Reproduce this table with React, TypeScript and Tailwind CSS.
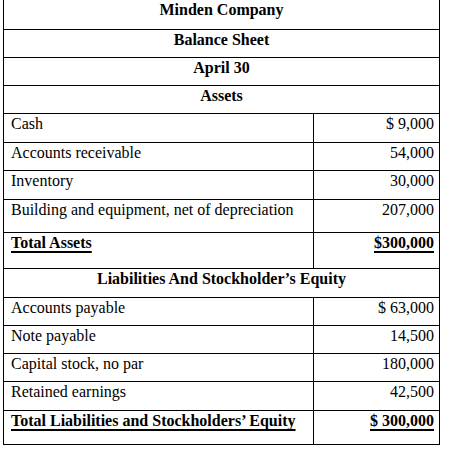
const serif = { fontFamily: '"Liberation Serif", "Times New Roman", serif' };

type Row = { label: string; value: string; h: string; total?: boolean };

const assets: Row[] = [
  { label: 'Cash', value: '$ 9,000', h: 'h-[29px]' },
  { label: 'Accounts receivable', value: '54,000', h: 'h-[28px]' },
  { label: 'Inventory', value: '30,000', h: 'h-[29px]' },
  { label: 'Building and equipment, net of depreciation', value: '207,000', h: 'h-[33px]' },
  { label: 'Total Assets', value: '$300,000', h: 'h-[36px]', total: true },
];

const liabilities: Row[] = [
  { label: 'Accounts payable', value: '$ 63,000', h: 'h-[28px]' },
  { label: 'Note payable', value: '14,500', h: 'h-[28px]' },
  { label: 'Capital stock, no par', value: '180,000', h: 'h-[28px]' },
  { label: 'Retained earnings', value: '42,500', h: 'h-[29px]' },
  { label: 'Total Liabilities and Stockholders\u2019 Equity', value: '$ 300,000', h: 'h-[34px]', total: true },
];

function Heading({ text, h }: { text: string; h: string }) {
  return (
    <div className={`${h} border-t border-black text-center font-bold pt-[1px] first:border-t-0`}>
      {text}
    </div>
  );
}

function Line({ row }: { row: Row }) {
  const txt = row.total ? 'font-bold underline decoration-2 underline-offset-[3px]' : '';
  return (
    <div className={`${row.h} flex border-t border-black`}>
      <div className="w-[310px] border-r border-black pl-[7px] pt-[1px]">
        <span className={txt}>{row.label}</span>
      </div>
      <div className="flex-1 text-right pr-[5px] pt-[1px]">
        <span className={txt}>{row.value}</span>
      </div>
    </div>
  );
}

export default function App() {
  return (
    <div className="w-[449px] h-[449px] bg-white" style={serif}>
      <div className="ml-[3px] w-[437px] border border-t-0 border-black text-[16px] leading-[18px] text-black">
        <Heading text="Minden Company" h="h-[29px]" />
        <Heading text="Balance Sheet" h="h-[28px]" />
        <Heading text="April 30" h="h-[28px]" />
        <Heading text="Assets" h="h-[28px]" />
        {assets.map((r) => (
          <Line key={r.label} row={r} />
        ))}
        <Heading text={'Liabilities And Stockholder\u2019s Equity'} h="h-[29px]" />
        {liabilities.map((r) => (
          <Line key={r.label} row={r} />
        ))}
      </div>
    </div>
  );
}
